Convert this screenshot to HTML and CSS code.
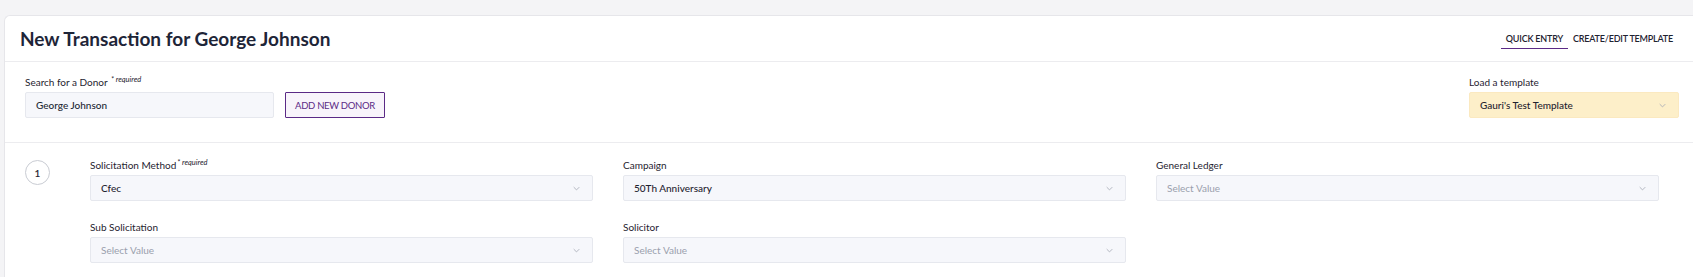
FILE: index.html
```html
<!DOCTYPE html>
<html lang="en">

<head>
    <meta charset="UTF-8">
    <meta name="viewport" content="width=device-width, initial-scale=1.0">
    <title>New Transaction</title>
    <link rel="stylesheet" href="styles.css">
</head>

<body>
    <div class="card">
        <div class="card-head">
            <h1 class="title">New Transaction for George Johnson</h1>
            <div class="tabs">
                <span class="tab active">QUICK ENTRY</span>
                <span class="tab">CREATE/EDIT TEMPLATE</span>
            </div>
        </div>

        <div class="donor-row">
            <div class="field">
                <label class="label">Search for a Donor <sup class="req">* required</sup></label>
                <div class="donor-search">
                    <div class="input donor-input">George Johnson</div>
                    <button class="btn-outline">ADD NEW DONOR</button>
                </div>
            </div>
            <div class="field template">
                <label class="label">Load a template</label>
                <div class="select select-yellow">
                    <span>Gauri's Test Template</span>
                    <svg class="chev" viewBox="0 0 10 6"><path d="M1 1l4 4 4-4" /></svg>
                </div>
            </div>
        </div>

        <div class="entry">
            <div class="step">1</div>
            <div class="grid">
                <div class="field">
                    <label class="label">Solicitation Method<sup class="req">* required</sup></label>
                    <div class="select">
                        <span>Cfec</span>
                        <svg class="chev" viewBox="0 0 10 6"><path d="M1 1l4 4 4-4" /></svg>
                    </div>
                </div>
                <div class="field">
                    <label class="label">Campaign</label>
                    <div class="select">
                        <span>50Th Anniversary</span>
                        <svg class="chev" viewBox="0 0 10 6"><path d="M1 1l4 4 4-4" /></svg>
                    </div>
                </div>
                <div class="field">
                    <label class="label">General Ledger</label>
                    <div class="select empty">
                        <span>Select Value</span>
                        <svg class="chev" viewBox="0 0 10 6"><path d="M1 1l4 4 4-4" /></svg>
                    </div>
                </div>
                <div class="field">
                    <label class="label">Sub Solicitation</label>
                    <div class="select empty">
                        <span>Select Value</span>
                        <svg class="chev" viewBox="0 0 10 6"><path d="M1 1l4 4 4-4" /></svg>
                    </div>
                </div>
                <div class="field">
                    <label class="label">Solicitor</label>
                    <div class="select empty">
                        <span>Select Value</span>
                        <svg class="chev" viewBox="0 0 10 6"><path d="M1 1l4 4 4-4" /></svg>
                    </div>
                </div>
            </div>
        </div>
    </div>
</body>

</html>
```

FILE: styles.css
```css
* {
    box-sizing: border-box;
}

html,
body {
    height: 100%;
    overflow: hidden;
}

body {
    margin: 0;
    padding: 15px 0 0 4px;
    background: #f4f4f6;
    font-family: Lato, "Open Sans", sans-serif;
    color: #222733;
}

.card {
    background: #fff;
    border: 1px solid #e6e6ea;
    border-right: 0;
    border-radius: 6px 0 0 0;
    min-height: calc(100% + 20px);
}

.card-head {
    display: flex;
    align-items: center;
    justify-content: space-between;
    height: 46px;
    padding: 0 15px 0 15px;
    border-bottom: 1px solid #ececef;
}

.title {
    margin: 0;
    font-size: 19px;
    font-weight: 700;
    color: #1e2538;
}

.tabs {
    display: flex;
    align-items: center;
    margin-top: 2px;
}

.tab {
    font-size: 9px;
    font-weight: 600;
    letter-spacing: -0.2px;
    color: #1e2230;
    padding: 3px 5px 4px;
    border-bottom: 1px solid transparent;
}

.tab.active {
    border-bottom-color: #5b2a86;
}

.donor-row {
    display: flex;
    justify-content: space-between;
    padding: 14px 14px 24px 20px;
    border-bottom: 1px solid #ececef;
}

.field {
    display: flex;
    flex-direction: column;
}

.label {
    font-size: 10px;
    line-height: 12px;
    height: 12px;
    margin-bottom: 4px;
    color: #1f2330;
    white-space: nowrap;
}

.req {
    font-size: 7.5px;
    font-style: italic;
    vertical-align: top;
    position: relative;
    top: -2px;
    margin-left: 1px;
}

.donor-search {
    display: flex;
    align-items: center;
    gap: 11px;
}

.input {
    height: 26px;
    display: flex;
    align-items: center;
    padding: 0 10px;
    background: #f6f7fb;
    border: 1px solid #e6e8ee;
    border-radius: 2px;
    font-size: 10px;
    font-weight: 500;
}

.donor-input {
    width: 249px;
}

.btn-outline {
    height: 26px;
    width: 100px;
    padding: 0;
    background: #f8f4fb;
    border: 1px solid #5b2a86;
    border-radius: 1px;
    color: #5b2a86;
    font-family: inherit;
    font-size: 9.5px;
    letter-spacing: -0.3px;
}

.template {
    width: 210px;
}

.select {
    height: 26px;
    display: flex;
    align-items: center;
    justify-content: space-between;
    padding: 0 12px 0 10px;
    background: #f6f7fb;
    border: 1px solid #e6e8ee;
    border-radius: 2px;
    font-size: 10px;
    font-weight: 500;
    color: #1f2330;
}

.select.empty {
    color: #9aa0ad;
    font-weight: 400;
}

.select-yellow {
    background: #fdefc9;
    border-color: #fbe9c0;
}

.chev {
    width: 7px;
    height: 5px;
    fill: none;
    stroke: #a7abb6;
    stroke-width: 1.2;
}

.entry {
    display: flex;
    align-items: flex-start;
    padding: 16px 0 0 20px;
}

.step {
    width: 25px;
    height: 25px;
    margin-top: 1px;
    border: 1px solid #c9ccd3;
    border-radius: 50%;
    display: flex;
    align-items: center;
    justify-content: center;
    font-size: 10px;
    font-weight: 600;
    color: #1f2330;
}

.grid {
    margin-left: 40px;
    display: grid;
    grid-template-columns: repeat(3, 503px);
    column-gap: 30px;
    row-gap: 20px;
}
```
